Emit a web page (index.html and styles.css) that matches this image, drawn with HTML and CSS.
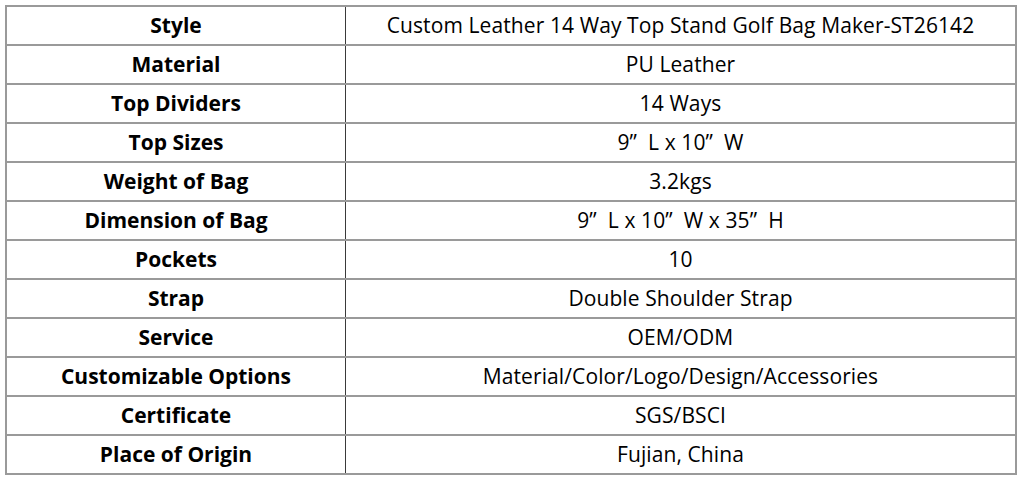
FILE: index.html
```html
<!DOCTYPE html>
<html>
<head>
<meta charset="utf-8">
<link rel="stylesheet" href="styles.css">
</head>
<body>
<table class="spec">
<tr><th>Style</th><td>Custom Leather 14 Way Top Stand Golf Bag Maker-ST26142</td></tr>
<tr><th>Material</th><td>PU Leather</td></tr>
<tr><th>Top Dividers</th><td>14 Ways</td></tr>
<tr><th>Top Sizes</th><td>9”&nbsp; L x 10”&nbsp; W</td></tr>
<tr><th>Weight of Bag</th><td>3.2kgs</td></tr>
<tr><th>Dimension of Bag</th><td>9”&nbsp; L x 10”&nbsp; W x 35”&nbsp; H</td></tr>
<tr><th>Pockets</th><td>10</td></tr>
<tr><th>Strap</th><td>Double Shoulder Strap</td></tr>
<tr><th>Service</th><td>OEM/ODM</td></tr>
<tr><th>Customizable Options</th><td>Material/Color/Logo/Design/Accessories</td></tr>
<tr><th>Certificate</th><td>SGS/BSCI</td></tr>
<tr><th>Place of Origin</th><td>Fujian, China</td></tr>
</table>
</body>
</html>
```
FILE: styles.css
```css
html, body {
  margin: 0;
  padding: 0;
  background: #ffffff;
}
body {
  padding: 5px 0 0 5px;
  font-family: "Open Sans", "Noto Sans", sans-serif;
  color: #000;
}
.spec {
  border-collapse: collapse;
  width: 1012px;
  border: 2px solid #9a9a9a;
}
.spec th, .spec td {
  height: 35px;
  padding: 0 0 2px 0;
  text-align: center;
  vertical-align: middle;
  font-size: 21px;
  border-top: 2px solid #9a9a9a;
  border-bottom: 2px solid #9a9a9a;
  line-height: 24px;
}
.spec th {
  width: 338px;
  font-weight: 700;
  border-right: 1px solid #3a3a3a;
}
.spec td {
  font-weight: 400;
  letter-spacing: 0.1px;
}
```
